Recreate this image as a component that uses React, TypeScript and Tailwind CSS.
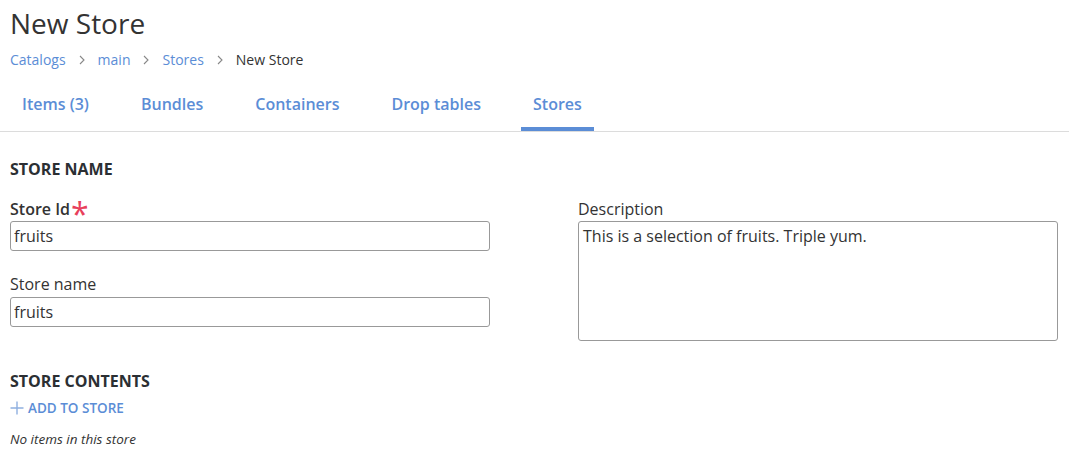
const tabs = ["Items (3)", "Bundles", "Containers", "Drop tables", "Stores"];

const crumbs = ["Catalogs", "main", "Stores"];

export default function App() {
  return (
    <div
      className="min-h-screen bg-white text-[#333]"
      style={{ fontFamily: '"Open Sans", sans-serif' }}
    >
      <div className="px-[10px] pt-[4px]">
        <h1 className="text-[28px] leading-[38px] font-normal text-[#333]">New Store</h1>
        <nav className="mt-[8px] flex items-center text-[14px] leading-[20px]">
          {crumbs.map((c) => (
            <span key={c} className="flex items-center">
              <a className="text-[#5b8dd6]">{c}</a>
              <svg className="mx-[13px] h-[10px] w-[6px]" viewBox="0 0 6 10" fill="none">
                <path d="M1 1l4 4-4 4" stroke="#888" strokeWidth="1.1" />
              </svg>
            </span>
          ))}
          <span className="text-[#333]">New Store</span>
        </nav>
      </div>

      <div className="mt-[23px] border-b border-[#dcdcdc]">
        <div className="flex px-[10px]">
          {tabs.map((t) => (
            <div
              key={t}
              className={`mr-[28px] px-[12px] pb-[12px] text-[16px] leading-[22px] font-semibold text-[#5b8dd6] border-b-4 ${
                t === "Stores" ? "border-[#5b8dd6]" : "border-transparent"
              }`}
            >
              {t}
            </div>
          ))}
        </div>
      </div>

      <div className="px-[10px]">
        <h2 className="mt-[27px] text-[16px] leading-[20px] font-bold text-[#2b2f33]">STORE NAME</h2>

        <div className="mt-[19px] flex gap-[88px]">
          <div className="w-[480px]">
            <label className="flex h-[22px] items-start text-[16px] leading-[22px] font-semibold text-[#333]">
              Store Id
              <span className="ml-[1px] h-[22px] text-[32px] leading-[32px] font-normal text-[#e8405b]">*</span>
            </label>
            <input
              className="mt-[1px] block h-[30px] w-full rounded-[3px] border border-[#999] px-[3px] text-[16px] text-[#333] outline-none"
              defaultValue="fruits"
            />
            <label className="mt-[22px] block text-[16px] leading-[22px] text-[#333]">Store name</label>
            <input
              className="mt-[2px] block h-[30px] w-full rounded-[3px] border border-[#999] px-[3px] text-[16px] text-[#333] outline-none"
              defaultValue="fruits"
            />
          </div>
          <div className="w-[480px]">
            <label className="block text-[16px] leading-[22px] text-[#333]">Description</label>
            <textarea
              className="mt-[1px] block h-[120px] w-full resize-none rounded-[3px] border border-[#999] px-[4px] py-[3px] text-[16px] leading-[22px] text-[#333] outline-none"
              defaultValue="This is a selection of fruits. Triple yum."
            />
          </div>
        </div>

        <h2 className="mt-[30px] text-[16px] leading-[20px] font-bold text-[#2b2f33]">STORE CONTENTS</h2>
        <button className="mt-[8px] flex items-center text-[13.5px] leading-[18px] font-semibold text-[#5b8dd6]">
          <svg className="mr-[4px] h-[14px] w-[14px]" viewBox="0 0 14 14" fill="none">
            <path d="M7 0.5v13M0.5 7h13" stroke="#8fb0e0" strokeWidth="1.4" />
          </svg>
          ADD TO STORE
        </button>
        <p className="mt-[13px] text-[13.5px] leading-[18px] italic text-[#333]">No items in this store</p>
      </div>
    </div>
  );
}
